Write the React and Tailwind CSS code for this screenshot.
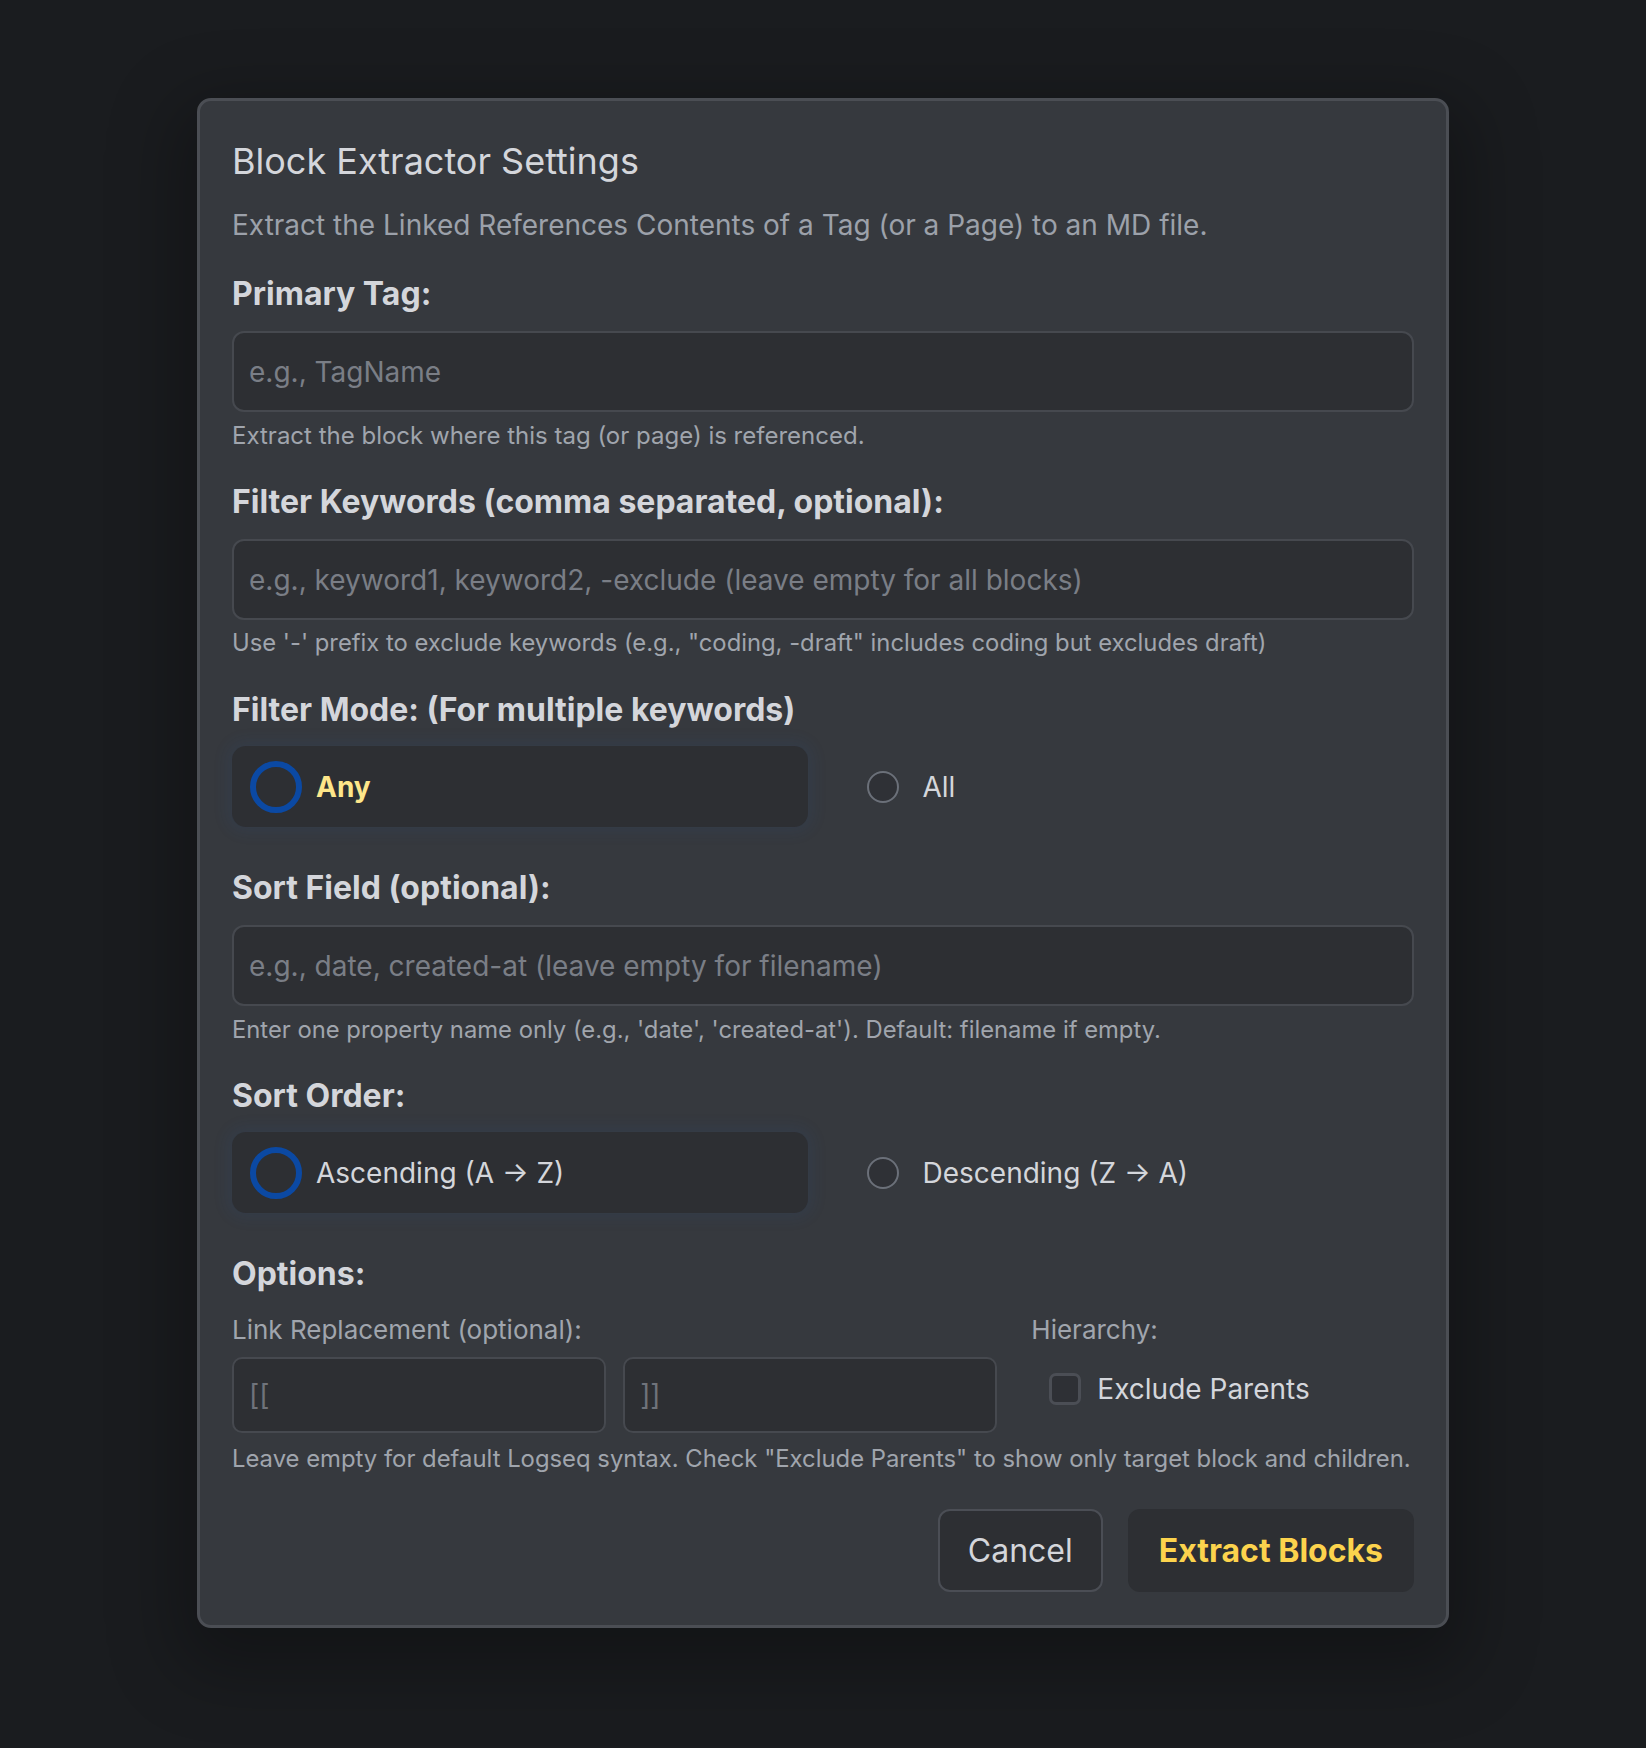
import React, { useState } from "react";

const font = { fontFamily: "Inter, 'Noto Sans', sans-serif" };

const RadioOption = ({ label, selected, bold, onClick }) => (
  <button
    type="button"
    onClick={onClick}
    className={`flex items-center gap-[14px] px-[18px] h-[81px] rounded-[14px] text-left ${
      selected
        ? "bg-[#2d2f33] shadow-[0_0_14px_6px_rgba(40,90,160,0.10)]"
        : "bg-transparent"
    }`}
  >
    <span className="w-[52px] h-[52px] flex items-center justify-center shrink-0">
      {selected ? (
        <span className="w-[52px] h-[52px] rounded-full border-[6px] border-[#0b49a3]" />
      ) : (
        <span className="w-[32px] h-[32px] rounded-full border-2 border-[#6b7079] bg-[#2f3136]" />
      )}
    </span>
    <span
      className={`text-[28px] ${
        bold ? "font-bold text-[#fde68a]" : "font-normal text-[#d4d6db]"
      }`}
    >
      {label}
    </span>
  </button>
);

const TextInput = ({ placeholder, className = "" }) => (
  <input
    type="text"
    placeholder={placeholder}
    className={`w-full h-[81px] px-[15px] rounded-[12px] bg-[#2d2f33] border-2 border-[#46494f] text-[28px] text-[#d4d6db] placeholder:text-[#7a7e86] outline-none ${className}`}
    style={font}
  />
);

export default function App() {
  const [filterMode, setFilterMode] = useState("any");
  const [sortOrder, setSortOrder] = useState("asc");
  const [excludeParents, setExcludeParents] = useState(false);

  return (
    <div
      className="min-h-screen w-full bg-[#1a1c1f] flex justify-center pt-[98px]"
      style={font}
    >
      <div className="w-[1252px] h-fit rounded-[14px] border-[3px] border-[#4b4e54] bg-[#36393e] px-[32px] pt-[32px] pb-[33px] flex flex-col shadow-[0_24px_70px_20px_rgba(0,0,0,0.28)]">
        <h2 className="text-[36px] leading-[56px] font-normal text-[#d4d6db]">
          Block Extractor Settings
        </h2>
        <p className="mt-[18px] text-[28px] leading-[36px] text-[#9ca1aa]">
          Extract the Linked References Contents of a Tag (or a Page) to an MD file.
        </p>

        {/* Primary tag */}
        <label className="mt-[33px] text-[32px] leading-[36px] font-bold text-[#d4d6db]">
          Primary Tag:
        </label>
        <TextInput placeholder="e.g., TagName" className="mt-[19px]" />
        <p className="mt-[9px] text-[24px] leading-[30px] text-[#a0a5ad]">
          Extract the block where this tag (or page) is referenced.
        </p>

        {/* Keywords */}
        <label className="mt-[33px] text-[32px] leading-[36px] font-bold text-[#d4d6db]">
          Filter Keywords (comma separated, optional):
        </label>
        <TextInput
          placeholder="e.g., keyword1, keyword2, -exclude (leave empty for all blocks)"
          className="mt-[19px]"
        />
        <p className="mt-[8px] text-[23.8px] leading-[30px] text-[#a0a5ad]">
          Use '-' prefix to exclude keywords (e.g., "coding, -draft" includes coding but excludes draft)
        </p>

        {/* Filter mode */}
        <label className="mt-[34px] text-[32px] leading-[36px] font-bold text-[#d4d6db]">
          Filter Mode: (For multiple keywords)
        </label>
        <div className="mt-[18px] grid grid-cols-2 gap-[31px]">
          <RadioOption
            label="Any"
            bold
            selected={filterMode === "any"}
            onClick={() => setFilterMode("any")}
          />
          <RadioOption
            label="All"
            selected={filterMode === "all"}
            onClick={() => setFilterMode("all")}
          />
        </div>

        {/* Sort field */}
        <label className="mt-[43px] text-[32px] leading-[36px] font-bold text-[#d4d6db]">
          Sort Field (optional):
        </label>
        <TextInput
          placeholder="e.g., date, created-at (leave empty for filename)"
          className="mt-[19px]"
        />
        <p className="mt-[9px] text-[23.8px] leading-[30px] text-[#a0a5ad]">
          Enter one property name only (e.g., 'date', 'created-at'). Default: filename if empty.
        </p>

        {/* Sort order */}
        <label className="mt-[33px] text-[32px] leading-[36px] font-bold text-[#d4d6db]">
          Sort Order:
        </label>
        <div className="mt-[18px] grid grid-cols-2 gap-[31px]">
          <RadioOption
            label="Ascending (A → Z)"
            selected={sortOrder === "asc"}
            onClick={() => setSortOrder("asc")}
          />
          <RadioOption
            label="Descending (Z → A)"
            selected={sortOrder === "desc"}
            onClick={() => setSortOrder("desc")}
          />
        </div>

        {/* Options */}
        <label className="mt-[43px] text-[32px] leading-[36px] font-bold text-[#d4d6db]">
          Options:
        </label>
        <div className="mt-[23px] grid grid-cols-[2fr_1fr] gap-x-[34px]">
          <div className="flex flex-col">
            <span className="text-[26px] leading-[30px] text-[#a0a5ad]">
              Link Replacement (optional):
            </span>
            <div className="mt-[12px] grid grid-cols-2 gap-[17px]">
              <input
                type="text"
                placeholder="[["
                className="h-[76px] px-[15px] rounded-[10px] bg-[#2d2f33] border-2 border-[#46494f] text-[28px] text-[#d4d6db] placeholder:text-[#6f737b] outline-none"
                style={font}
              />
              <input
                type="text"
                placeholder="]]"
                className="h-[76px] px-[15px] rounded-[10px] bg-[#2d2f33] border-2 border-[#46494f] text-[28px] text-[#d4d6db] placeholder:text-[#6f737b] outline-none"
                style={font}
              />
            </div>
          </div>
          <div className="flex flex-col">
            <span className="text-[26px] leading-[30px] text-[#a0a5ad]">Hierarchy:</span>
            <button
              type="button"
              onClick={() => setExcludeParents(!excludeParents)}
              className="mt-[28px] ml-[18px] flex items-center gap-[16px] text-left"
            >
              <span className="w-[32px] h-[32px] rounded-[7px] border-[3px] border-[#4b4e55] bg-[#2e3035] flex items-center justify-center">
                {excludeParents && (
                  <svg viewBox="0 0 24 24" className="w-[20px] h-[20px]" fill="none" stroke="#fcd34d" strokeWidth="3">
                    <path d="M5 12l5 5L20 7" />
                  </svg>
                )}
              </span>
              <span className="text-[28px] leading-[32px] text-[#d4d6db]">Exclude Parents</span>
            </button>
          </div>
        </div>
        <p className="mt-[11px] text-[23.85px] leading-[30px] text-[#a0a5ad] whitespace-nowrap">
          Leave empty for default Logseq syntax. Check "Exclude Parents" to show only target block and children.
        </p>

        {/* Actions */}
        <div className="mt-[35px] flex justify-end gap-[25px]">
          <button
            type="button"
            className="h-[83px] px-[28px] rounded-[12px] border-2 border-[#4b4e55] bg-[#2d2f33] text-[32px] text-[#d4d6db]"
          >
            Cancel
          </button>
          <button
            type="button"
            className="h-[83px] px-[31px] rounded-[12px] bg-[#2d2f33] text-[32px] font-bold text-[#fcd34d]"
          >
            Extract Blocks
          </button>
        </div>
      </div>
    </div>
  );
}
